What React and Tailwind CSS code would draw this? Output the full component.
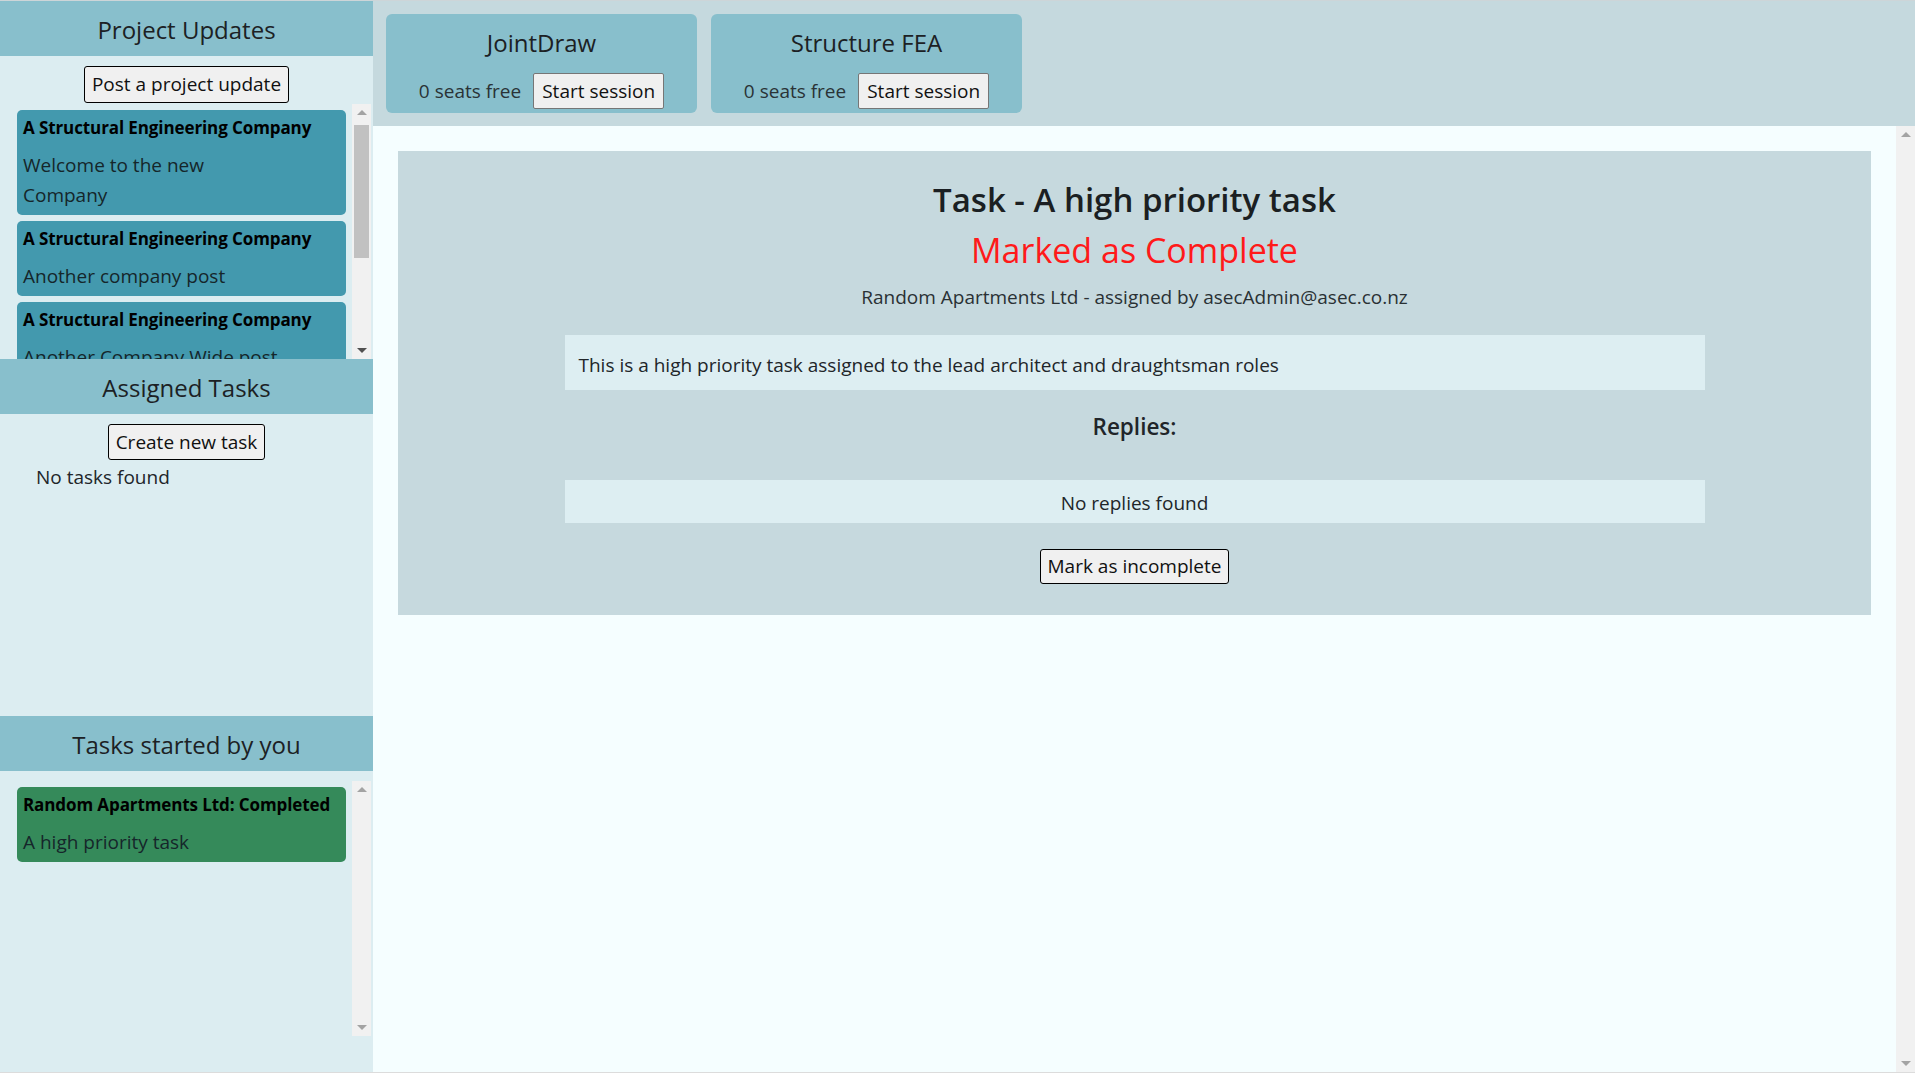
import React from 'react';

const btn = "bg-[#f0f0f0] border border-black rounded-[3px] px-[7px] text-[19px] text-[#111] leading-none";

const updates = [
    { title: 'A Structural Engineering Company', body: <>Welcome to the new<br />Company</> },
    { title: 'A Structural Engineering Company', body: 'Another company post' },
    { title: 'A Structural Engineering Company', body: 'Another Company Wide post' },
];

const Arrow = ({ up, dark }) => (
    <div className="h-[17px] flex items-center justify-center">
        {up ? (
            <div className={`w-0 h-0 border-x-[5px] border-x-transparent border-b-[5px] ${dark ? 'border-b-[#505050]' : 'border-b-[#a3a3a3]'}`} />
        ) : (
            <div className={`w-0 h-0 border-x-[5px] border-x-transparent border-t-[5px] ${dark ? 'border-t-[#505050]' : 'border-t-[#a3a3a3]'}`} />
        )}
    </div>
);

const Scrollbar = ({ thumb, dark }) => (
    <div className="w-[19px] shrink-0 bg-[#f1f1f1] flex flex-col">
        <Arrow up />
        <div className="flex-1 px-[2px]">
            {thumb && <div className="mt-[4px] h-[133px] bg-[#c1c1c1]" />}
        </div>
        <Arrow dark={dark} />
    </div>
);

const Card = ({ title, children, green }) => (
    <div className={`rounded-[5px] px-[6px] pt-[4px] pb-[5px] shrink-0 ${green ? 'bg-[#358a5a]' : 'bg-[#4399ae]'}`}>
        <div className="text-[17px] leading-[27px] font-bold text-black mb-[9px] whitespace-nowrap tracking-[-0.1px]">{title}</div>
        <div className="text-[19px] leading-[30px] text-[#15262a]">{children}</div>
    </div>
);

const SideHeader = ({ children }) => (
    <div className="h-[55px] shrink-0 bg-[#88bfcc] flex items-center justify-center pt-[2px] text-[24px] text-[#1c2124]">
        {children}
    </div>
);

const App = () => {
    return (
        <div className="flex h-[1073px] w-full overflow-hidden border-t border-t-[#cdd5d8] border-b border-b-[#dcdcdc] font-['Open_Sans','Noto_Sans',sans-serif] text-[#212529]">
            {/* Sidebar */}
            <div className="w-[373px] shrink-0 bg-[#dcedf1] flex flex-col">
                <SideHeader>Project Updates</SideHeader>
                <div className="h-[303px] shrink-0 flex flex-col">
                    <div className="flex justify-center pt-[10px]">
                        <button className={`${btn} h-[37px]`}>Post a project update</button>
                    </div>
                    <div className="mt-[1px] h-[255px] flex pl-[17px] pr-[2px]">
                        <div className="flex-1 overflow-hidden pt-[6px] pr-[6px] flex flex-col gap-[6px]">
                            {updates.map((u, i) => (
                                <Card key={i} title={u.title}>{u.body}</Card>
                            ))}
                        </div>
                        <Scrollbar thumb dark />
                    </div>
                </div>

                <SideHeader>Assigned Tasks</SideHeader>
                <div className="h-[302px] shrink-0">
                    <div className="flex justify-center pt-[10px]">
                        <button className={`${btn} h-[36px]`}>Create new task</button>
                    </div>
                    <p className="pl-[36px] mt-[2px] text-[19px] leading-[30px]">No tasks found</p>
                </div>

                <SideHeader>Tasks started by you</SideHeader>
                <div className="flex-1">
                    <div className="mt-[10px] h-[255px] flex pl-[17px] pr-[2px]">
                        <div className="flex-1 overflow-hidden pt-[6px] pr-[6px] flex flex-col">
                            <Card title="Random Apartments Ltd: Completed" green>A high priority task</Card>
                        </div>
                        <Scrollbar />
                    </div>
                </div>
            </div>

            {/* Main */}
            <div className="flex-1 flex flex-col min-w-0">
                <div className="h-[125px] shrink-0 bg-[#c5d9de] flex gap-[14px] pl-[13px] pt-[13px]">
                    {['JointDraw', 'Structure FEA'].map(name => (
                        <div key={name} className="w-[311px] h-[99px] rounded-[6px] bg-[#88bfcc] flex flex-col items-center pt-[11px]">
                            <div className="text-[24px] leading-[36px] text-[#1c2124]">{name}</div>
                            <div className="mt-[12px] flex items-center gap-[12px]">
                                <span className="text-[19px] text-[#2a3336]">0 seats free</span>
                                <button className="h-[36px] bg-[#f0f0f0] border border-[#767676] rounded-[2px] px-[8px] text-[19px] leading-none text-[#111]">Start session</button>
                            </div>
                        </div>
                    ))}
                </div>

                <div className="flex-1 flex bg-[#f5feff]">
                    <div className="flex-1 p-[25px]">
                        <div className="bg-[#c6d9de] pt-[25px] pb-[31px] flex flex-col items-center">
                            <h1 className="text-[33px] leading-[48px] font-semibold text-[#1b1f22]">Task - A high priority task</h1>
                            <h2 className="mt-[2px] text-[34px] leading-[48px] text-[#ff1a1a]">Marked as Complete</h2>
                            <p className="mt-[8px] text-[19px] leading-[30px] text-[#2a3134]">Random Apartments Ltd - assigned by asecAdmin@asec.co.nz</p>

                            <div className="mt-[23px] w-[1140px] h-[55px] bg-[#ddeef2] flex items-center pl-[14px] pt-[4px]">
                                <span className="text-[19px] leading-[30px]">This is a high priority task assigned to the lead architect and draughtsman roles</span>
                            </div>

                            <h3 className="mt-[19px] text-[22.5px] leading-[36px] font-semibold">Replies:</h3>

                            <div className="mt-[35px] w-[1140px] h-[43px] bg-[#ddeef2] flex items-center justify-center pt-[2px]">
                                <span className="text-[19px] leading-[30px]">No replies found</span>
                            </div>

                            <button className={`${btn} mt-[26px] h-[35px]`}>Mark as incomplete</button>
                        </div>
                    </div>
                    <Scrollbar />
                </div>
            </div>
        </div>
    );
};

export default App;
